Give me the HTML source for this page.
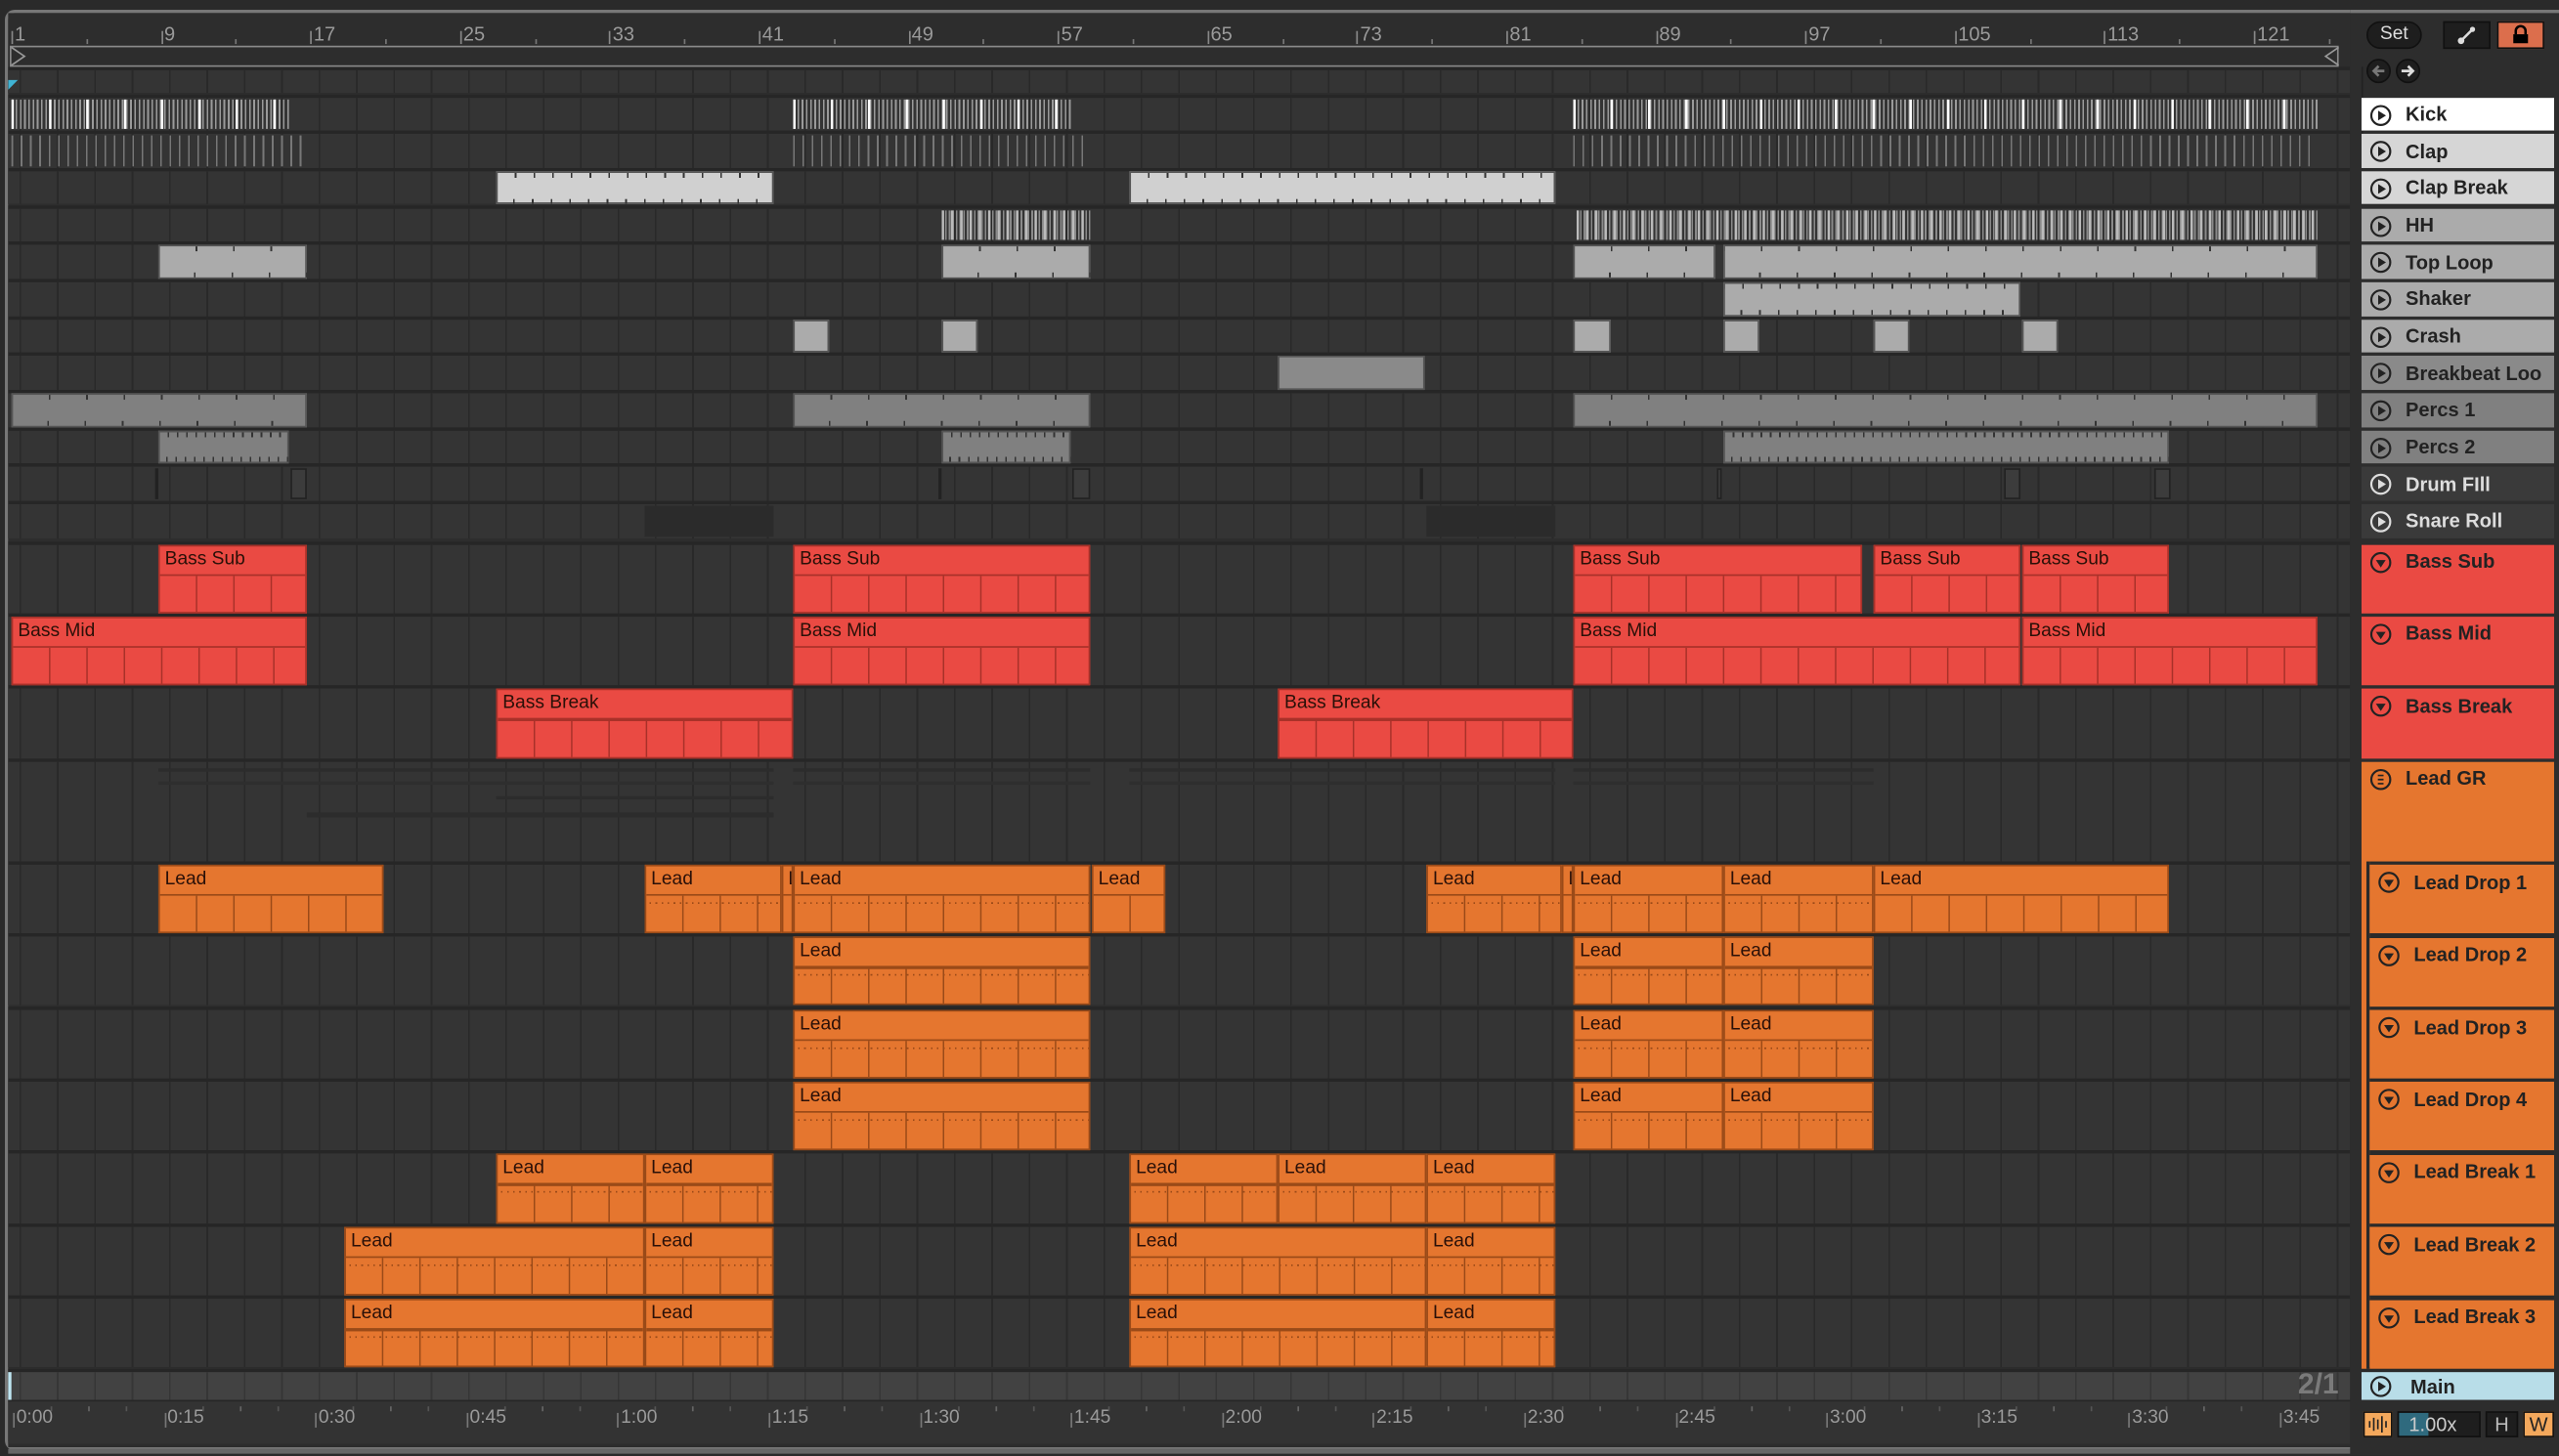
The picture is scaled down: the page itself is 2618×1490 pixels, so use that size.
<!DOCTYPE html>
<html><head><meta charset="utf-8">
<style>
html,body{margin:0;padding:0;background:#2a2a2a;width:2618px;height:1490px;overflow:hidden}
#s{position:absolute;left:0;top:0;width:1568px;height:892.5px;transform:scale(1.66964);transform-origin:0 0;background:#2a2a2a;font-family:"Liberation Sans",sans-serif;overflow:hidden}
.a{position:absolute;box-sizing:border-box}
.lbl{position:absolute;font-size:10.5px;color:#9a9a9a}
.hd{position:absolute;box-sizing:border-box;font-size:12px;font-weight:bold;color:#222;padding-left:27px}
.ct{position:absolute;left:3px;top:2px;font-size:11.5px;color:#2a1008;white-space:nowrap;overflow:hidden}
</style></head><body><div id="s"></div>
<script>
const S=document.getElementById('s');
function R(x,y,w,h,st,html){const d=document.createElement('div');d.className='a';d.style.cssText=`left:${x}px;top:${y}px;width:${w}px;height:${h}px;`+(st||'');if(html)d.innerHTML=html;S.appendChild(d);return d;}
R(3,6,1445,883,'border:2px solid #777;border-right:none;border-radius:6px 0 0 6px;');
R(5,8,1443,879,'background:#2d2d2d;');
const bx=n=>7+(n-1)*11.45;
for(let n=1;n<=121;n+=8){const x=bx(n);R(x,19,1,8,'background:#888;');S.insertAdjacentHTML('beforeend',`<div class="lbl" style="left:${x+2}px;top:14px;font-size:12px">${n}</div>`);
 if(n+4<=125)R(bx(n+4),24,1,3,'background:#777;');}
R(6,28,1427,13,'border:1px solid #8a8a8a;');
S.insertAdjacentHTML('beforeend',`<svg style="position:absolute;left:6px;top:28px" width="1430" height="13"><path d="M1 1 L9 6.5 L1 12" fill="none" stroke="#999"/><path d="M1427 1 L1419 6.5 L1427 12" fill="none" stroke="#999"/></svg>`);
const lanes=[];
lanes.push([41,16]);
for(let i=0;i<12;i++)lanes.push([57.5+i*22.67,22.67]);
for(let i=0;i<3;i++)lanes.push([331.5+i*44.4,44.4]);
lanes.push([464.7,63]);
for(let i=0;i<7;i++)lanes.push([527.7+i*44.4,44.4]);
const gridBg='background-color:#343434;background-image:repeating-linear-gradient(90deg,#292929 0 1px,transparent 1px 22.9px);background-position:7px 0;';
lanes.forEach(([y,h])=>{R(5,y,1435,h,'background:#262626;');R(5,y+2,1435,h-2,gridBg);});
R(5,838.5,1435,20,'background:#262626;');
R(5,840.5,1435,17,'background-color:#424242;background-image:repeating-linear-gradient(90deg,#363636 0 1px,transparent 1px 22.9px);background-position:7px 0;');
R(5,840.5,2,17,'background:#bfe6f2;');
S.insertAdjacentHTML('beforeend',`<div class="lbl" style="left:1408px;top:838px;font-size:18px;font-weight:bold;color:#7a7a7a">2/1</div>`);
S.insertAdjacentHTML('beforeend',`<svg style="position:absolute;left:5px;top:49px" width="8" height="8"><path d="M0 0 L6 0 L0 6Z" fill="#3fb3d3"/></svg>`);
R(5,858.5,1435,26,'background:#333;');
const tl=['0:00','0:15','0:30','0:45','1:00','1:15','1:30','1:45','2:00','2:15','2:30','2:45','3:00','3:15','3:30','3:45'];
tl.forEach((t,i)=>{const x=8+i*92.6;R(x,866,1,9,'background:#777;');S.insertAdjacentHTML('beforeend',`<div class="lbl" style="left:${x+2}px;top:863px;font-size:11.5px">${t}</div>`);R(x+46,862,1,3,'background:#666;');R(x+23,862,1,3,'background:#555;');R(x+69,862,1,3,'background:#555;');});
R(5,888,1563,3,'background:#666;');
const rt=i=>57.5+i*22.67+2, rh=20.67;
function solid(row,x1,x2,col,tick){R(x1,rt(row),x2-x1,rh,`background:${col};border:1px solid #555;background-image:repeating-linear-gradient(90deg,transparent 0 ${tick-1}px,#333 ${tick-1}px ${tick}px);background-size:100% 3px;background-repeat:repeat-x;`);
 R(x1,rt(row)+rh-4,x2-x1,3,`background-image:repeating-linear-gradient(90deg,transparent 0 ${tick-1}px,#333 ${tick-1}px ${tick}px);`);}
function lines(row,x1,x2,c1,step,c2,big){R(x1,rt(row)+1,x2-x1,rh-2,`background-image:${big?`repeating-linear-gradient(90deg,${c2} 0 1.5px,transparent 1.5px ${big}px),`:''}repeating-linear-gradient(90deg,${c1} 0 1px,transparent 1px ${step}px);`);}
[[7,177],[486,656],[964,1420]].forEach(([a,b])=>lines(0,a,b,'#9a9a9a',2.6,'#fff',22.9));
[[7,188],[486,668],[964,1420]].forEach(([a,b])=>lines(1,a,b,'#777',5.7));
[[304,474],[692,953]].forEach(([a,b])=>solid(2,a,b,'#d0d0d0',11.45));
[[577,668],[966,1420]].forEach(([a,b])=>lines(3,a,b,'#8a8a8a',2.2,'#bbb',5.7));
[[97,188],[577,668],[964,1051],[1056,1420]].forEach(([a,b])=>solid(4,a,b,'#ababab',22.9));
solid(5,1056,1238,'#ababab',11.45);
[[486,508],[577,599],[964,987],[1056,1078],[1148,1170],[1239,1261]].forEach(([a,b])=>R(a,rt(6),b-a,rh,'background:#ababab;border:1px solid #555;'));
R(783,rt(7),90,rh,'background:#8a8a8a;border:1px solid #555;');
[[7,188],[486,668],[964,1420]].forEach(([a,b])=>solid(8,a,b,'#808080',22.9));
[[97,177],[577,656],[1056,1329]].forEach(([a,b])=>solid(9,a,b,'#808080',5.7));
[[95,97],[178,188],[575,577],[657,668],[870,872],[1052,1055],[1228,1238],[1320,1330]].forEach(([a,b])=>R(a,rt(10)+1,b-a,rh-2,'background:#3c3c3c;border:1px solid #222;'));
[[395,474],[874,953]].forEach(([a,b])=>R(a,rt(11)+1,b-a,rh-2,'background:#2b2b2b;'));
function big(y,x1,x2,col,bd,name,dots){const d=R(x1,y+2,x2-x1,42.4,`background:${col};border:1px solid ${bd};overflow:hidden;`);
 d.innerHTML=`<div class="ct">${name}</div><div class="a" style="left:0;top:17px;width:100%;height:1.5px;background:${bd}"></div><div class="a" style="left:0;top:18px;width:100%;height:24px;background-image:repeating-linear-gradient(90deg,transparent 0 21.9px,${bd} 21.9px 22.9px);background-size:22.9px 100%"></div>`+(dots?`<div class="a" style="left:2px;top:22px;width:100%;height:1px;background-image:repeating-linear-gradient(90deg,${bd} 0 1px,transparent 1px 3.7px)"></div>`:'');}
const by=i=>331.5+i*44.4, ly=i=>527.7+i*44.4;
const RED='#ea4a43',RB='#a83129',OR='#e5762f',OB='#9a4a18';
[[97,188],[486,668],[964,1141],[1148,1238],[1239,1329]].forEach(([a,b])=>big(by(0),a,b,RED,RB,'Bass Sub'));
[[7,188],[486,668],[964,1238],[1239,1420]].forEach(([a,b])=>big(by(1),a,b,RED,RB,'Bass Mid'));
[[304,486],[783,964]].forEach(([a,b])=>big(by(2),a,b,RED,RB,'Bass Break'));
[[97,474],[486,668],[692,953],[964,1148]].forEach(([a,b])=>{R(a,471,b-a,2,'background:#2c2c2c;');R(a,479,b-a,2,'background:#2e2e2e;');});
R(188,498,286,3,'background:#2c2c2c;');R(304,488,170,2,'background:#2c2c2c;');
[[97,235,'Lead'],[395,479,'Lead',1],[479,486,'L'],[486,668,'Lead',1],[669,714,'Lead'],[874,957,'Lead',1],[957,964,'L'],[964,1056,'Lead',1],[1056,1148,'Lead',1],[1148,1329,'Lead']].forEach(([a,b,n,d])=>big(ly(0),a,b,OR,OB,n,d));
for(let r=1;r<4;r++)[[486,668],[964,1056],[1056,1148]].forEach(([a,b])=>big(ly(r),a,b,OR,OB,'Lead',1));
[[304,395],[395,474],[692,783],[783,874],[874,953]].forEach(([a,b])=>big(ly(4),a,b,OR,OB,'Lead',1));
for(let r=5;r<7;r++)[[211,395],[395,474],[692,874],[874,953]].forEach(([a,b])=>big(ly(r),a,b,OR,OB,'Lead',1));
R(1440,0,128,892,'background:#2d2d2d;');
R(1440,0,128,6,'background:#2a2a2a;');R(1440,6,128,2,'background:#777;');
R(1450,13,34,17,'background:#1e1e1e;border:1px solid #111;border-radius:9px;color:#ddd;font-size:11.5px;text-align:center;line-height:15px;','Set');
R(1497,13,29,17,'background:#1e1e1e;border:1px solid #111;');
S.insertAdjacentHTML('beforeend',`<svg style="position:absolute;left:1505px;top:15px" width="14" height="13"><path d="M3 10 L10 3" stroke="#ddd" stroke-width="1.5"/><circle cx="3" cy="10" r="2" fill="#ddd"/><circle cx="10" cy="3" r="1.6" fill="#ddd"/></svg>`);
R(1530,13,29,17,'background:#dc6e4c;border:1px solid #111;');
S.insertAdjacentHTML('beforeend',`<svg style="position:absolute;left:1538px;top:15px" width="13" height="12"><path d="M3.5 6 V4 a3 3 0 0 1 6 0 V6" fill="none" stroke="#000" stroke-width="1.5"/><rect x="2" y="6" width="9" height="5.5" fill="#000"/></svg>`);
R(1450,36,15,15,'background:#1e1e1e;border:1px solid #111;border-radius:50%;');
R(1468,36,15,15,'background:#1e1e1e;border:1px solid #111;border-radius:50%;');
S.insertAdjacentHTML('beforeend',`<svg style="position:absolute;left:1450px;top:36px" width="34" height="15"><path d="M11 7.5 H4.5 M7.5 4.5 L4.5 7.5 L7.5 10.5" fill="none" stroke="#777" stroke-width="1.6"/><path d="M21.5 7.5 H28.5 M25.5 4.5 L28.5 7.5 L25.5 10.5" fill="none" stroke="#ddd" stroke-width="1.6"/></svg>`);
R(1447,41,1,48,'background:#222;');
function icon(type,c){const inner=type=='p'?`<path d="M5.2 3.8 L10 6.8 L5.2 9.8Z" fill="${c}"/>`:type=='d'?`<path d="M3.8 5.3 L9.8 5.3 L6.8 9.8Z" fill="${c}"/>`:`<path d="M5 4.3h3.5M5 6.8h3.5M5 9.3h3.5" stroke="${c}" stroke-width="1"/>`;
 return `<svg style="position:absolute;left:5px;top:4px" width="14" height="14"><circle cx="6.8" cy="6.8" r="5.8" fill="none" stroke="${c}" stroke-width="1.3"/>${inner}</svg>`;}
function hd(y,h,col,name,type,txt,x){x=x||1447;txt=txt||'#222';const d=R(x,y,1565-x,h,`background:${col};`);d.className='hd';d.style.color=txt;d.innerHTML=icon(type,txt)+`<div style="position:absolute;left:27px;top:3.5px;white-space:nowrap">${name}</div>`;return d;}
const dcols=['#fff','#d6d6d6','#d6d6d6','#ababab','#ababab','#ababab','#ababab','#8a8a8a','#808080','#808080'];
const dn=['Kick','Clap','Clap Break','HH','Top Loop','Shaker','Crash','Breakbeat Loo','Percs 1','Percs 2'];
dn.forEach((n,i)=>hd(rt(i),rh,dcols[i],n,'p'));
['Drum FIll','Snare Roll'].forEach((n,i)=>hd(rt(10+i),rh,'#3a3a3a',n,'p','#ddd'));
['Bass Sub','Bass Mid','Bass Break'].forEach((n,i)=>hd(by(i)+2,42.4,RED,n,'d'));
hd(466.7,372,OR,'Lead GR','g');
R(1450,527.7,2,311,'background:#2a2a2a;');
['Lead Drop 1','Lead Drop 2','Lead Drop 3','Lead Drop 4','Lead Break 1','Lead Break 2','Lead Break 3'].forEach((n,i)=>{R(1452,ly(i),113,2.5,'background:#2a2a2a;');hd(ly(i)+2.5,41.9,OR,n,'d',null,1452);});
R(1447,838.5,118,2,'background:#2a2a2a;');
const m=hd(840.5,17.5,'#b8dde8','Main','p');m.lastChild.style.left='30px';m.lastChild.style.top='2px';m.firstChild.style.top='2px';
R(1448,865,18,16,'background:#f4a85c;border:1px solid #111;');
S.insertAdjacentHTML('beforeend',`<svg style="position:absolute;left:1450px;top:867px" width="14" height="12"><path d="M2 4v4M4.5 2v8M7 3v6M9.5 1v10M12 4v4" stroke="#222" stroke-width="1"/></svg>`);
R(1469,865,51,16,'background:#1e1e1e;border:1px solid #111;');
R(1470,866,18,14,'background:#2f6a7e;');
R(1470,865,50,16,'color:#ccc;font-size:12px;line-height:16px;padding-left:6px;','1.00x');
R(1523,865,20,16,'background:#1e1e1e;border:1px solid #111;color:#bbb;font-size:12px;text-align:center;line-height:15px;','H');
R(1546,865,19,16,'background:#f4a85c;border:1px solid #111;color:#222;font-size:12px;text-align:center;line-height:15px;','W');
</script></body></html>
